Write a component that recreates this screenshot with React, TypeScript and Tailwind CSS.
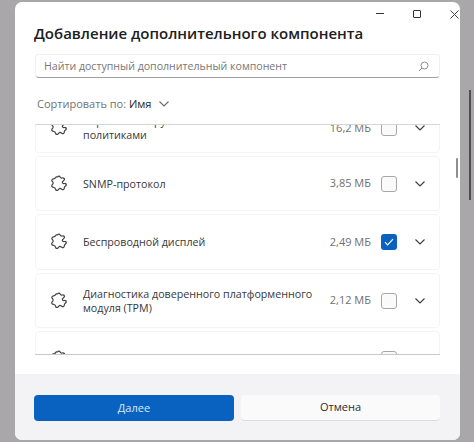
const font = "font-['Open_Sans','Noto_Sans',sans-serif]";

function Puzzle() {
  return (
    <svg width="16" height="18" viewBox="0 0 16 18" fill="none" stroke="#444444" strokeWidth="1.25" strokeLinejoin="round" strokeLinecap="round" className="shrink-0">
      <path d="M6.6 1.8C7.4.9 8.6 1 9.1 2c.4.8 1.2 1.3 2.2 1 1-.3 2.1.1 2.2 1.2.1.8-.5 1.3-1.2 1.8-.9.6-1.1 1.4-.7 2 .4.7 1.2.7 2 .5 1-.2 1.8.5 1.6 1.5-.2.8-.9 1.1-1.4 1.6-.5.6-.4 1.4-.6 2.1-.3 1-1.4 1.2-2.2.7-.7-.4-1.2-1.2-2.2-1-.9.2-1.2 1.2-2 1.8-.9.6-2 .2-2.2-.8-.2-.9-.5-1.6-1.5-1.9-.9-.3-2-.3-2.3-1.3-.3-.9.5-1.5 1-2.2.4-.6.4-1.3 0-1.9-.5-.7-1.2-1.3-.9-2.2.3-1 1.4-1 2.3-1.2 1-.2 1.6-1 2.1-1.9z" />
    </svg>
  );
}

function Chevron({ className = "", color = "#6a6a6a" }: { className?: string; color?: string }) {
  return (
    <svg width="12" height="8" viewBox="0 0 12 8" fill="none" stroke={color} strokeWidth="1.1" className={className}>
      <path d="M1.5 1.5l4.5 4.5 4.5-4.5" />
    </svg>
  );
}

function Check({ on }: { on?: boolean }) {
  return on ? (
    <div className="w-4 h-4 rounded-[3px] bg-[#0a62c0] flex items-center justify-center">
      <svg width="10" height="8" viewBox="0 0 10 8" fill="none" stroke="#ffffff" strokeWidth="1.2">
        <path d="M1 4.2l2.6 2.6L9 1.2" />
      </svg>
    </div>
  ) : (
    <div className="w-4 h-4 rounded-[3px] border border-[#a8a6a8] bg-[#fbfafb]" />
  );
}

function Row({ title, size, checked, h = "h-[55px]" }: { title: React.ReactNode; size: string; checked?: boolean; h?: string }) {
  return (
    <div className={`${h} shrink-0 rounded-[4px] border border-[#f5f4f5] bg-white flex items-center pl-[15px] pr-[13px]`}>
      <Puzzle />
      <div className="ml-[16px] flex-1 text-[10.7px] leading-[14px] text-[#383838] whitespace-nowrap">{title}</div>
      <div className="text-[11px] text-[#707070] whitespace-nowrap">{size}</div>
      <div className="ml-[10px] mr-[17px]"><Check on={checked} /></div>
      <Chevron color="#3c3c3c" />
    </div>
  );
}

export default function App() {
  return (
    <div className={`${font} w-[474px] h-[442px] bg-[#a9a7a9] pt-[2px] pl-[15px] relative overflow-hidden`}>
      <div className="w-[445px] h-[438px] bg-white rounded-[7px] flex flex-col overflow-hidden relative">
        <div className="h-[21px] shrink-0 flex items-start justify-end pt-[8px]">
          <div className="w-[8px] h-px bg-[#333] mt-[3px] mr-[29px]" />
          <div className="w-[8px] h-[8px] border border-[#333] rounded-[1px] mr-[29px]" />
          <svg width="9" height="9" viewBox="0 0 9 9" stroke="#444" strokeWidth="1" className="mr-[1px]"><path d="M.5.5l8 8M8.5.5l-8 8" /></svg>
        </div>
        <div className="pl-[19px] text-[15px] leading-[20px] font-semibold text-[#202020]">Добавление дополнительного компонента</div>
        <div className="mt-[11px] mx-[20px] h-[24px] shrink-0 rounded-[4px] bg-white border border-[#f0f0f0] border-b-[#a0a0a0] flex items-center pl-[8px] pr-[10px]">
          <div className="flex-1 text-[10.6px] text-[#777777] pt-[1px]">Найти доступный дополнительный компонент</div>
          <svg width="11" height="11" viewBox="0 0 11 11" fill="none" stroke="#909090" strokeWidth="1"><circle cx="6.5" cy="4.5" r="3.5" /><path d="M4 7L1 10" /></svg>
        </div>
        <div className="mt-[17px] pl-[22px] h-[18px] flex items-center text-[11px] text-[#727272]">
          Сортировать по:&nbsp;<span className="text-[#262626]">Имя</span>
          <Chevron className="ml-[7px]" />
        </div>
        <div className="mt-[11px] mx-[20px] h-[231px] shrink-0 overflow-hidden border-t border-t-[#d5d5d5] border-b border-b-[#c9c9c9]">
          <div className="flex flex-col gap-[3px] -mt-[22px]">
            <Row h="h-[50px]" title={<>Управление групповыми<br />политиками</>} size="16,2 МБ" />
            <Row title="SNMP-протокол" size="3,85 МБ" />
            <Row h="h-[56px]" title="Беспроводной дисплей" size="2,49 МБ" checked />
            <Row title={<>Диагностика доверенного платформенного<br />модуля (TPM)</>} size="2,12 МБ" />
            <Row title="Защитник" size="1,50 МБ" />
          </div>
        </div>
        <div className="flex-1" />
        <div className="h-[66px] shrink-0 bg-[#f3f2f4] flex items-start gap-[7px] pt-[21px] pl-[19px] pr-[20px]">
          <div className="w-[200px] h-[26px] rounded-[4px] bg-[#0a62c0] text-[#d8ebff] text-[11px] flex items-center justify-center">Далее</div>
          <div className="flex-1 h-[26px] rounded-[4px] bg-[#fbfafb] border-b border-b-[#dcdcdc] text-[#2c2c2c] text-[11px] flex items-center justify-center">Отмена</div>
        </div>
      </div>
      <div className="absolute left-[456px] top-[158px] w-[2px] h-[20px] rounded-full bg-[#8f8f8f]" />
      <div className="absolute left-[469px] top-[90px] w-[2px] h-[110px] bg-[#4f4e50]" />
    </div>
  );
}
